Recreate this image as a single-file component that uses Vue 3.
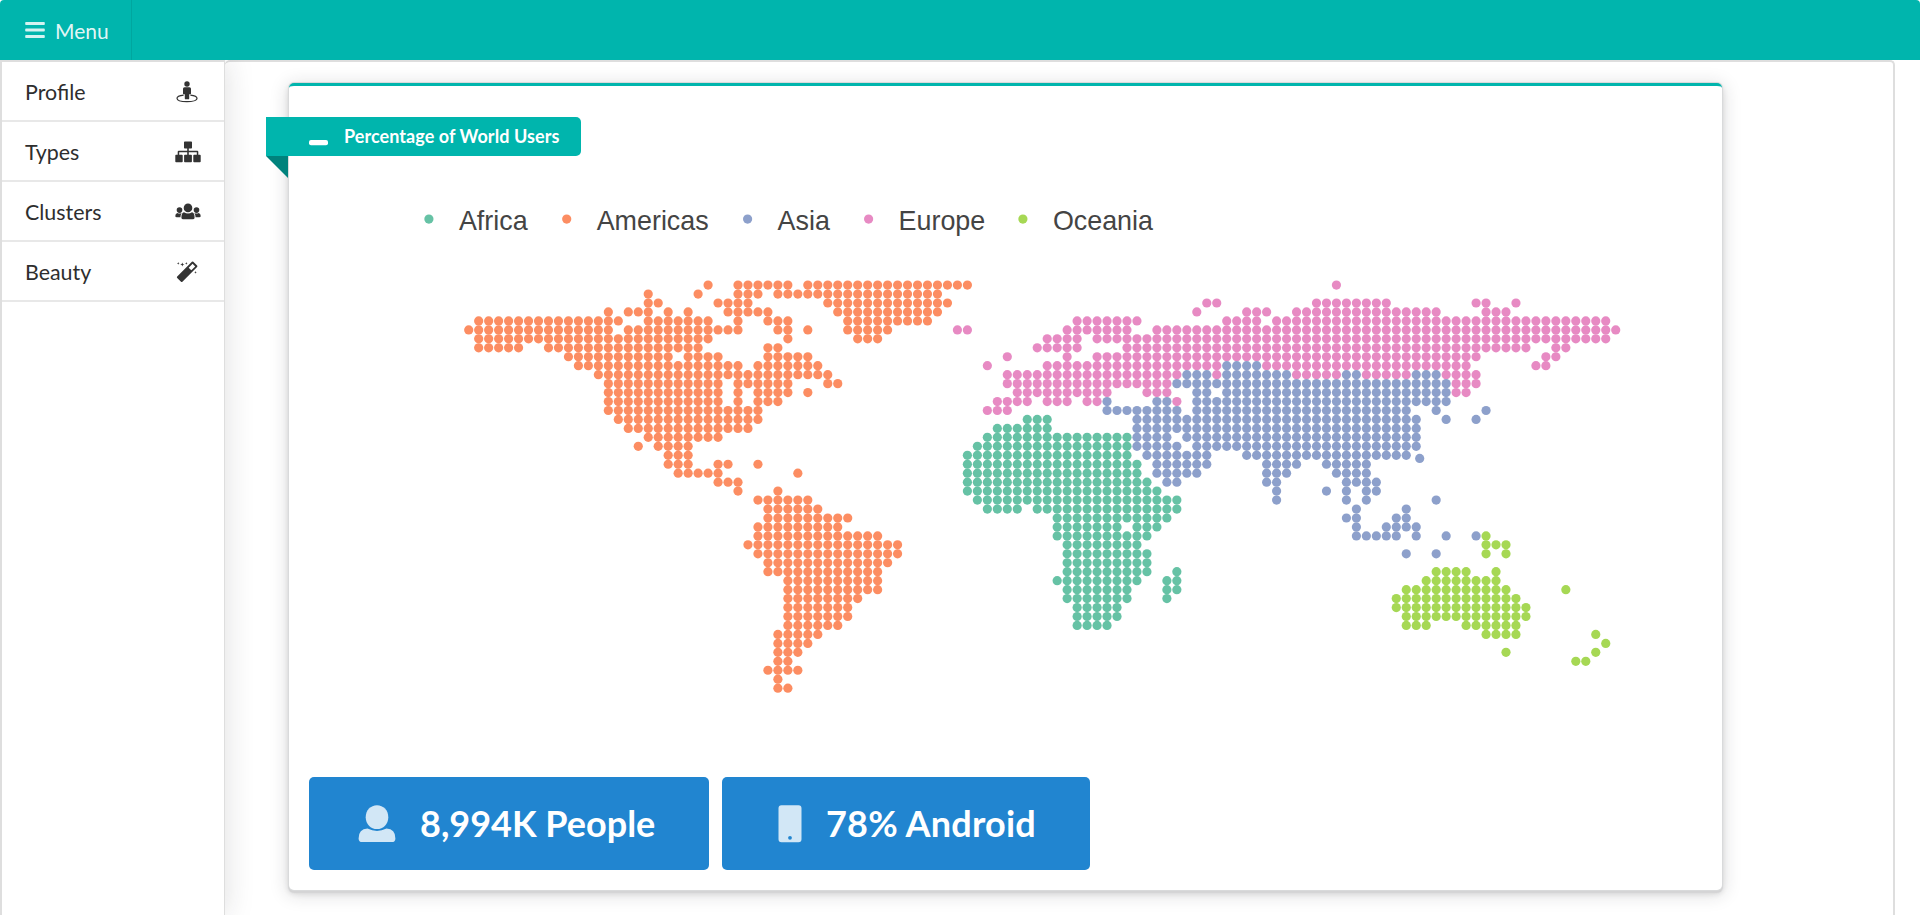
<script setup>
const menuItems = ['Profile', 'Types', 'Clusters', 'Beauty']

const legend = [
  { name: 'Africa', color: '#66c2a5', x: 428.9 },
  { name: 'Americas', color: '#fc8d62', x: 566.7 },
  { name: 'Asia', color: '#8da0cb', x: 747.6 },
  { name: 'Europe', color: '#e78ac3', x: 868.6 },
  { name: 'Oceania', color: '#a6d854', x: 1022.9 },
]

// Each region lists its grid cells as "row:columns", columns being single cells or spans.
const regions = [
  {
    color: '#fc8d62',
    cells:
      '0:24,27-32,34-50 1:18,23,27-29,31-47 2:18-19,25-28,36-48 3:14,16-18,20,22,26-30,37-47 ' +
      '4:1-15,18-24,27,30-32,38-46 5:0-14,16-27,31-32,34,38-42 6:1-24,32,39-41 7:1-5,8-23,30-31 ' +
      '8:10-20,22-25,30-34 9:11-27,29-35 10:13-36 11:14-25,27-32,36-37 12:14-25,27,29-32,34 ' +
      '13:14-25,27,29-31 14:14-29 15:15-29 16:16-28 17:18-25 18:17,19-22 19:20-22 20:20-22,25-26,29 ' +
      '21:21-25,33 22:25-27 23:27,31 24:29-34 25:30-35 26:30-38 27:29-37 28:29-41 29:28-43 30:29-43 ' +
      '31:30-42 32:30-41 33:32-41 34:32-41 35:32-39 36:32-38 37:32-38 38:32-37 39:31-35 40:31-34 ' +
      '41:31-33 42:31-32 43:30-33 44:31 45:31-32',
  },
  {
    color: '#e78ac3',
    cells:
      '0:87 2:74-75,85-92,101-102,105 3:73,78-80,83-97,102-104 4:61-67,76-79,81-114 ' +
      '5:49-50,60-66,69-115 6:58-61,63-114 7:57-61,66-106,109-110 8:54,60,63-101,108-109 ' +
      '9:52,58-75,80-100,107-108 10:54-71,75,83-87,90-94,98-101 11:54-70,99-101 ' +
      '12:55-64,68-70,99-100 13:53-56,58-60,62-63,71 14:52-54',
  },
  {
    color: '#8da0cb',
    cells:
      '9:76-79 10:72-74,76-82,88-89,95-97 11:71-98 12:73-74,76-98 13:64,69-70,73-98 ' +
      '14:64-71,73-94,97,102 15:67-95,98,101 16:67-95 17:67-70,72-95 18:67-71,73-95 ' +
      '19:68-74,78-94 20:69-74,80-83,86-90 21:69-73,80-82,87-90 22:70-71,80-81,88-91 ' +
      '23:81,86,88,90-91 24:81,88,90,97 25:89,94 26:88-89,93-94 27:89,92-95 28:89-93,95,98,101 30:94,97',
  },
  {
    color: '#66c2a5',
    cells:
      '15:56-58 16:53-58 17:52-66 18:51-66 19:50-66 20:50-67 21:50-67 22:50-68 23:50-69 24:51-71 ' +
      '25:52-55,57-71 26:59-70 27:59-65,67-69 28:59-68 29:60-67 30:60-68 31:60-68 32:60-68,71 ' +
      '33:59-67,70-71 34:60-66,70-71 35:60-66,70 36:61-65 37:61-65 38:61-64',
  },
  {
    color: '#a6d854',
    cells:
      '28:102 29:102-104 30:102,104 32:97-100,103 33:96-103 34:94-104,110 35:93-105 36:93-106 ' +
      '37:94-106 38:94-96,100-105 39:102-105,113 40:114 41:104,113 42:111-112',
  },
]

const dots = []
for (const region of regions) {
  for (const row of region.cells.split(' ')) {
    const [r, spans] = row.split(':')
    for (const span of spans.split(',')) {
      const [from, to = from] = span.split('-').map(Number)
      for (let c = from; c <= to; c++) {
        dots.push({ x: 468.7 + c * 9.974, y: 285.1 + r * 8.957, color: region.color })
      }
    }
  }
}
dots.push({ x: 1419.7, y: 458.4, color: '#8da0cb' })
</script>

<template>
  <div class="page">
    <header class="topbar">
      <a class="menu-toggle">
        <svg class="bars" width="20" height="17" viewBox="0 0 20 17">
          <path d="M1 0h18q.8 0 .8.8v1.4q0 .8-.8.8H1q-.8 0-.8-.8V.8Q.2 0 1 0zM1 6.6h18q.8 0 .8.8v1.4q0 .8-.8.8H1q-.8 0-.8-.8V7.400q0-.8.8-.8zM1 13.100h18q.8 0 .8.8v1.400q0 .8-.8.8H1q-.8 0-.8-.8v-1.400q0-.8.8-.8z" />
        </svg>
        <span>Menu</span>
      </a>
    </header>
    <div class="body">
      <nav class="sidebar">
        <a v-for="item in menuItems" :key="item" class="item">
          <span>{{ item }}</span>
          <svg v-if="item === 'Profile'" class="icon" width="26" height="24" viewBox="0 0 26 24">
            <circle cx="12" cy="4" r="2.700" />
            <path d="M9.500 7.200h5q1.500 0 1.500 1.500v4.700q0 .9-.9.900h-.9v4.100q0 .9-.9.900h-2.600q-.9 0-.9-.9v-4.100h-.9q-.9 0-.9-.9V8.700q0-1.500 1.500-1.500z" />
            <path d="M8.600 15.100C4.500 15.600 2 16.700 2 18.200 2 20.400 6.500 21.700 12 21.700s10-1.300 10-3.500c0-1.500-2.500-2.600-6.600-3.100" fill="none" stroke="#333" stroke-width="1.200" />
          </svg>
          <svg v-else-if="item === 'Types'" class="icon" width="26" height="24" viewBox="0 0 26 24">
            <path d="M9.800 1.500h6.400q.8 0 .8.8v5.400q0 .8-.8.8h-2.400v2.200h8.400q1.100 0 1.100 1.100v2.900h1.600q.8 0 .8.8v5.900q0 .8-.8.800h-5.800q-.8 0-.8-.8v-5.900q0-.8.8-.8h2.700v-2.500h-8v2.500h2.300q.8 0 .8.8v5.900q0 .8-.8.800H9.900q-.8 0-.8-.8v-5.900q0-.8.8-.8h2.300v-2.500h-8v2.500h2.700q.8 0 .8.8v5.900q0 .8-.8.800H1.100q-.8 0-.8-.8v-5.900q0-.8.8-.8h1.600v-2.900q0-1.100 1.100-1.100h8.400V8.500H9.800q-.8 0-.8-.8V2.300q0-.8.8-.8z" />
          </svg>
          <svg v-else-if="item === 'Clusters'" class="icon" width="26" height="24" viewBox="0 0 26 24">
            <circle cx="13" cy="7.900" r="4.300" />
            <circle cx="4.500" cy="10.100" r="2.800" />
            <circle cx="21.500" cy="10.100" r="2.800" />
            <path d="M9 12.200q4 2.600 8 0 2.600.6 2.600 5.200 0 1.900-1.900 1.900H8.300q-1.900 0-1.900-1.900 0-4.600 2.600-5.200zM2.400 12.900q2.100 1 4.200 0-1.100 1.700-1.200 4.300H1.700Q.3 17.200.3 16q0-2.600 2.100-3.100zM23.600 12.900q-2.100 1-4.200 0 1.100 1.700 1.200 4.300h3.700q1.400 0 1.400-1.200 0-2.600-2.100-3.100z" />
          </svg>
          <svg v-else class="icon" width="26" height="24" viewBox="0 0 26 24">
            <g transform="translate(-1 -.3)">
              <path fill-rule="evenodd" d="M17.900 2.100q.7-.7 1.400 0l3.800 3.800q.7.700 0 1.400L8.400 22q-.7.700-1.400 0l-3.800-3.800q-.7-.7 0-1.400zm.7 2-3.900 3.900 2.600 2.600 3.900-3.900z" />
              <path d="m8.300 2.800.6 1.400 1.500.6-1.500.6-.6 1.500-.6-1.500-1.500-.6 1.500-.6zM4.200 2.400l.4 1 .9.300-.9.400-.4.900-.3-.9-1-.4 1-.3zM12.300 2.400l.4 1 .9.300-.9.400-.4.900-.3-.9-1-.4 1-.3zM21.500 11.400l.4 1 .9.300-.9.400-.4.900-.3-.9-1-.4 1-.3z" />
            </g>
          </svg>
        </a>
      </nav>
      <main class="content">
        <section class="card">
          <div class="ribbon">
            <svg class="minus" width="19" height="6" viewBox="0 0 19 6"><rect width="19" height="5.300" rx="2" fill="#fff" /></svg>
            <span>Percentage of World Users</span>
          </div>
          <svg class="chart" width="1430" height="600" viewBox="290 177 1430 600">
            <g v-for="l in legend" :key="l.name">
              <circle :cx="l.x" cy="219.100" r="4.600" :fill="l.color" />
              <text :transform="`translate(${l.x + 30} 229.5) scale(1.008 1.04)`" class="legend">{{ l.name }}</text>
            </g>
            <circle v-for="(d, i) in dots" :key="i" :cx="d.x" :cy="d.y" r="4.600" :fill="d.color" />
          </svg>
          <div class="stats">
            <div class="stat people">
              <svg width="38" height="38" viewBox="0 0 38 38">
                <path d="M19 .3c6.300 0 11.300 4.900 11.300 11.900S25.300 24.100 19 24.100 7.700 19.200 7.700 12.200 12.700.3 19 .3z" />
                <path d="M9.500 23.600q9.500 4.900 19 0 8.900.6 8.900 9.800 0 3.700-3.700 3.700H4.300Q.6 37.100.6 33.400q0-9.200 8.900-9.800z" />
              </svg>
              <span>8,994K People</span>
            </div>
            <div class="stat android">
              <svg width="24" height="38" viewBox="0 0 24 38">
                <path fill-rule="evenodd" d="M3.500.3h17Q23.500.3 23.500 3.300v31q0 3-3 3h-17q-3 0-3-3v-31q0-3 3-3zM12 30.900a1.900 1.900 0 1 0 0 3.800 1.900 1.900 0 0 0 0-3.800z" />
              </svg>
              <span>78% Android</span>
            </div>
          </div>
        </section>
      </main>
    </div>
  </div>
</template>

<style>
html,
body {
  margin: 0;
  background: #fff;
  overflow: hidden;
}
</style>

<style scoped>
.page {
  box-sizing: border-box;
  height: 915px;
  overflow: hidden;
  font-family: Lato, "Liberation Sans", sans-serif;
  display: flex;
  flex-direction: column;
}
.topbar {
  height: 60px;
  flex: none;
  background: #00b5ad;
  border-radius: 4px 4px 0 0;
  display: flex;
}
.menu-toggle {
  box-sizing: border-box;
  width: 132px;
  padding-left: 25px;
  border-right: 1px solid #00a69f;
  display: flex;
  align-items: center;
  gap: 10px;
  color: rgba(255, 255, 255, 0.9);
  font-size: 21px;
}
.bars {
  fill: rgba(255, 255, 255, 0.83);
}
.menu-toggle span {
  padding-top: 1px;
}
.body {
  flex: 1;
  display: flex;
}
.sidebar {
  box-sizing: border-box;
  width: 225px;
  border: 2px solid #dedede;
  border-right-width: 1px;
  border-bottom: 0;
  background: #fff;
  position: relative;
  z-index: 1;
  box-shadow: 0 0 28px rgba(34, 36, 38, 0.15);
  clip-path: inset(0 -60px 0 0);
}
.item {
  box-sizing: border-box;
  height: 60px;
  border-bottom: 2px solid #e8e8e8;
  padding: 0 23px 0 23px;
  display: flex;
  align-items: center;
  justify-content: space-between;
  font-size: 21.4px;
  color: #2e2e2e;
}
.item span {
  margin-top: 2px;
}
.icon {
  fill: #333;
  margin-top: 1px;
}
.content {
  box-sizing: border-box;
  width: 1670px;
  border: 2px solid #dedede;
  border-left: 0;
  border-bottom: 0;
  border-radius: 5px 5px 0 0;
  padding: 21px 0 0 64px;
}
.card {
  box-sizing: border-box;
  width: 1433px;
  height: 807px;
  background: #fff;
  border-top: 3px solid #00b5ad;
  border-radius: 5px;
  box-shadow: 0 0 0 1px #d9dadb, 0 2px 1px 1px #d4d4d5, 0 3px 6px rgba(34, 36, 38, 0.14), 0 3px 18px 2px rgba(34, 36, 38, 0.15);
  display: flex;
  flex-direction: column;
  padding-top: 31px;
}
.ribbon {
  box-sizing: border-box;
  position: relative;
  flex: none;
  width: 315px;
  height: 39px;
  margin-left: -23px;
  padding-left: 43px;
  background: #00b5ad;
  border-radius: 0 5px 5px 0;
  color: #fff;
  font-size: 18px;
  letter-spacing: 0.07px;
  font-weight: 700;
  white-space: nowrap;
  display: flex;
  align-items: center;
  gap: 16px;
}
.ribbon span {
  margin-top: -2px;
}
.ribbon::after {
  content: "";
  position: absolute;
  left: 0;
  top: 39px;
  border-style: solid;
  border-width: 0 22px 22px 0;
  border-color: transparent #00827c transparent transparent;
}
.minus {
  margin-top: 12px;
}
.chart {
  flex: none;
  margin: 21px 0 0 1px;
}
.legend {
  font: 26.67px "Liberation Sans", Arial, sans-serif;
  fill: #444;
}
.stats {
  display: flex;
  gap: 13px;
  padding-left: 20px;
}
.stat {
  box-sizing: border-box;
  height: 93px;
  width: 400px;
  padding-left: 49px;
  border-radius: 5px;
  background: #2185d0;
  color: #fff;
  font-size: 36px;
  font-weight: 700;
  white-space: nowrap;
  display: flex;
  align-items: center;
  gap: 24px;
}
.stat span {
  margin-top: -2px;
}
.stat svg {
  fill: rgba(255, 255, 255, 0.8);
}
.stat.android {
  width: 368px;
  padding-left: 56px;
}
.stat.android span {
  letter-spacing: 0.2px;
}
</style>
